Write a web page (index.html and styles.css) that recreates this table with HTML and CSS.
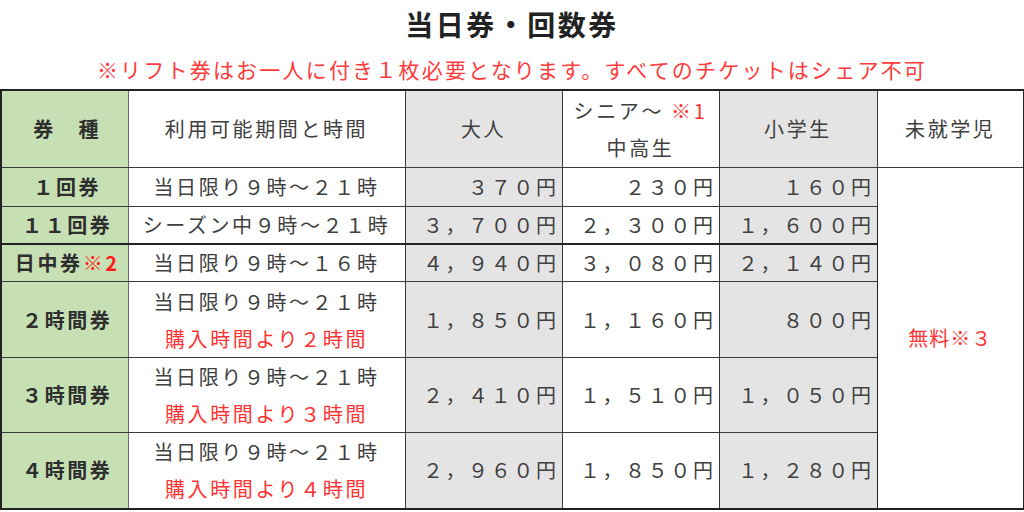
FILE: index.html
```html
<!DOCTYPE html>
<html lang="ja">
<head>
<meta charset="utf-8">
<link rel="stylesheet" href="styles.css">
</head>
<body>
<div class="page">
  <h1 class="title">当日券・回数券</h1>
  <p class="note">※リフト券はお一人に付き１枚必要となります。すべてのチケットはシェア不可</p>
  <table class="price">
    <colgroup>
      <col class="c-type"><col class="c-time"><col class="c-adult"><col class="c-senior"><col class="c-child"><col class="c-infant">
    </colgroup>
    <tr class="r-head">
      <th class="kind">券　種</th>
      <th>利用可能期間と時間</th>
      <th class="gray">大人</th>
      <th class="two">シニア～ <span class="red">※1</span><br>中高生</th>
      <th class="gray">小学生</th>
      <th>未就学児</th>
    </tr>
    <tr class="r-s1">
      <td class="kind">１回券</td>
      <td class="time">当日限り９時～２１時</td>
      <td class="num gray">３７０円</td>
      <td class="num">２３０円</td>
      <td class="num gray">１６０円</td>
      <td class="free" rowspan="6">無料※３</td>
    </tr>
    <tr class="r-s2 thick">
      <td class="kind">１１回券</td>
      <td class="time">シーズン中９時～２１時</td>
      <td class="num gray">３，７００円</td>
      <td class="num">２，３００円</td>
      <td class="num gray">１，６００円</td>
    </tr>
    <tr class="r-s3">
      <td class="kind">日中券<span class="red-b">※2</span></td>
      <td class="time">当日限り９時～１６時</td>
      <td class="num gray">４，９４０円</td>
      <td class="num">３，０８０円</td>
      <td class="num gray">２，１４０円</td>
    </tr>
    <tr class="r-d1">
      <td class="kind">２時間券</td>
      <td class="time two">当日限り９時～２１時<br><span class="red">購入時間より２時間</span></td>
      <td class="num gray">１，８５０円</td>
      <td class="num">１，１６０円</td>
      <td class="num gray">８００円</td>
    </tr>
    <tr class="r-d2">
      <td class="kind">３時間券</td>
      <td class="time two">当日限り９時～２１時<br><span class="red">購入時間より３時間</span></td>
      <td class="num gray">２，４１０円</td>
      <td class="num">１，５１０円</td>
      <td class="num gray">１，０５０円</td>
    </tr>
    <tr class="r-d3">
      <td class="kind">４時間券</td>
      <td class="time two">当日限り９時～２１時<br><span class="red">購入時間より４時間</span></td>
      <td class="num gray">２，９６０円</td>
      <td class="num">１，８５０円</td>
      <td class="num gray">１，２８０円</td>
    </tr>
  </table>
</div>
</body>
</html>
```
FILE: styles.css
```css
html, body {
  margin: 0;
  padding: 0;
  background: #ffffff;
}
body {
  font-family: "Noto Sans CJK JP", "Noto Sans", sans-serif;
  color: #3d3d3d;
}
.page {
  width: 1024px;
  height: 512px;
  overflow: hidden;
}
.title {
  margin: 0;
  height: 48px;
  line-height: 48px;
  text-align: center;
  font-size: 28px;
  font-weight: 700;
  letter-spacing: 2.5px;
  color: #222222;
}
.note {
  margin: 0;
  height: 41px;
  line-height: 42px;
  text-align: center;
  font-size: 21px;
  letter-spacing: 2.2px;
  color: #ff3b3b;
}
.price {
  border-collapse: collapse;
  table-layout: fixed;
  width: 1023px;
  border: 2px solid #222222;
}
.c-type { width: 127px; }
.c-time { width: 277px; }
.c-adult { width: 157px; }
.c-senior { width: 157px; }
.c-child { width: 158px; }
.c-infant { width: 147px; }
.price th, .price td {
  border: 1px solid #3a3a3a;
  padding: 0;
  font-size: 20px;
  letter-spacing: 2.6px;
  font-weight: 400;
  text-align: center;
  line-height: 36px;
  white-space: nowrap;
  color: #404040;
}
.price .kind {
  background: #c6e0b4;
  font-weight: 700;
  color: #2e2e2e;
  padding-left: 5px;
  border-right-color: #6a6a6a;
}
.price .gray {
  background: #e4e4e4;
}
.price .num {
  text-align: right;
  padding-right: 3px;
}
.price .two {
  line-height: 37px;
}
.r-head { height: 77px; }
.r-s1 { height: 39px; }
.r-s2 { height: 38px; }
.r-s3 { height: 37px; }
.r-d1 { height: 76px; }
.r-d2 { height: 74px; }
.r-d3 { height: 76px; }
.thick td {
  border-bottom: 2px solid #222222;
}
.red {
  color: #ff3333;
}
.red-b {
  color: #ff1a1a;
}
.price .free {
  color: #ff3333;
  vertical-align: middle;
  letter-spacing: 1px;
  border-left: 1px solid #222222;
}
```
